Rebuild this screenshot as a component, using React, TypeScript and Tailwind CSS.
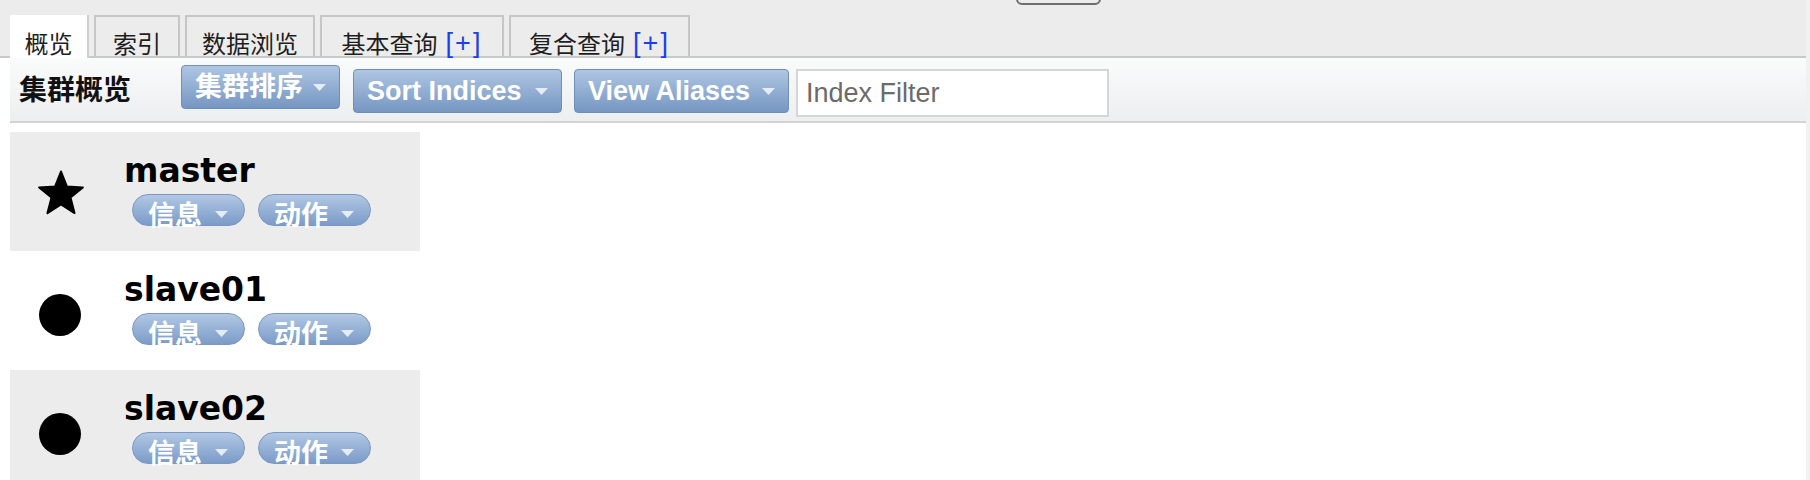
import React from "react"

const cjk = "font-['Noto_Sans_CJK_SC',sans-serif]"
const sans = "font-['Liberation_Sans','Noto_Sans_CJK_SC',sans-serif]"

const tabs = [
  { label: "概览", w: "w-[79px]", active: true },
  { label: "索引", w: "w-[86px]" },
  { label: "数据浏览", w: "w-[130px]" },
  { label: "基本查询", w: "w-[184px]", plus: true },
  { label: "复合查询", w: "w-[181px]", plus: true },
]

const nodes = [
  { name: "master", master: true },
  { name: "slave01" },
  { name: "slave02" },
]

const Caret = ({ className = "" }: { className?: string }) => (
  <svg className={className} width="13" height="7" viewBox="0 0 13 7">
    <path d="M0 0H13L6.5 7Z" fill="#e6ecf5" />
  </svg>
)

const Star = () => (
  <svg width="48" height="46" viewBox="0 0 48 46">
    <path
      d="M24 1.5L29.88 16.41L45.87 17.39L33.51 27.59L37.52 43.11L24 34.5L10.48 43.11L14.49 27.59L2.13 17.39L18.12 16.41Z"
      fill="#000"
      stroke="#000"
      strokeWidth="2"
      strokeLinejoin="round"
    />
  </svg>
)

function ToolButton({ label, w, top }: { label: string; w: string; top: string }) {
  return (
    <button
      className={`${w} ${top} h-[44px] flex items-center justify-between pl-[13px] pr-[13px] rounded-[4px] border border-[#6f8fbb] bg-gradient-to-b from-[#afc6e3] to-[#7696c2] text-white text-[27px] font-bold leading-none ${sans}`}
    >
      <span>{label}</span>
      <Caret />
    </button>
  )
}

function Pill({ label }: { label: string }) {
  return (
    <button
      className={`w-[113px] h-[32px] flex items-start justify-between pl-[15px] pr-[16px] pt-[5px] rounded-full border border-[#7a98c4] bg-gradient-to-b from-[#b2c8e4] to-[#7b9bc8] text-white text-[27px] font-bold leading-[27px] ${cjk}`}
    >
      <span>{label}</span>
      <Caret className="mt-[11px]" />
    </button>
  )
}

export default function App() {
  return (
    <div className="w-[1810px] h-[480px] flex bg-[#f1f1f1] overflow-hidden">
      <div className="w-[1806px] h-full flex flex-col bg-white">
        {/* header strip */}
        <div className="bg-[#ececec] flex flex-col">
          <div className="h-[15px] flex items-start pl-[1016px]">
            <div className="w-[85px] h-[35px] -mt-[30px] shrink-0 rounded-[6px] border-2 border-[#6e6e6e]" />
          </div>
          <div className="flex gap-[5px] pl-[10px] border-b-2 border-[#c9c9c9]">
            {tabs.map((t) =>
              t.active ? (
                <div
                  key={t.label}
                  className={`${t.w} h-[43px] -mb-[2px] flex justify-center pt-[16px] bg-white border-r-2 border-[#cfcfcf] text-[24px] leading-[24px] text-[#1e1e1e] ${cjk}`}
                >
                  {t.label}
                </div>
              ) : (
                <div
                  key={t.label}
                  className={`${t.w} h-[41px] flex justify-center pt-[14px] border-2 border-b-0 border-[#c6c6c6] text-[24px] leading-[24px] text-[#1e1e1e] whitespace-nowrap ${cjk}`}
                >
                  {t.label}
                  {t.plus && (
                    <span className={`ml-[8px] text-[#1d3fe6] text-[27px] tracking-[2px] ${sans}`}>[+]</span>
                  )}
                </div>
              )
            )}
          </div>
        </div>

        {/* toolbar */}
        <div className="ml-[10px] h-[65px] shrink-0 flex items-start border-b-2 border-[#d3d3d3] bg-gradient-to-b from-[#fafbfb] to-[#eceef0]">
          <h2 className={`mt-[16px] ml-[9px] mr-[50px] text-[28px] leading-[28px] font-bold text-[#111] ${cjk}`}>集群概览</h2>
          <ToolButton label="集群排序" w="w-[159px]" top="mt-[7px]" />
          <div className="ml-[13px]">
            <ToolButton label="Sort Indices" w="w-[209px]" top="mt-[11px]" />
          </div>
          <div className="ml-[12px]">
            <ToolButton label="View Aliases" w="w-[215px]" top="mt-[11px]" />
          </div>
          <input
            placeholder="Index Filter"
            className={`ml-[7px] mt-[11px] w-[313px] h-[48px] px-[8px] bg-white border-2 border-[#d6d6d6] text-[27px] text-[#333] placeholder:text-[#6b6b6b] outline-none ${sans}`}
          />
        </div>

        {/* nodes */}
        <div className="ml-[10px] mt-[9px] w-[410px] flex flex-col">
          {nodes.map((n, i) => (
            <div key={n.name} className={`h-[119px] shrink-0 flex ${i % 2 === 0 ? "bg-[#ececec]" : "bg-white"}`}>
              <div className="w-[99px] flex justify-center items-start">
                {n.master ? (
                  <div className="mt-[38px] ml-[2px]">
                    <Star />
                  </div>
                ) : (
                  <div className="mt-[43px] w-[42px] h-[42px] rounded-full bg-black" />
                )}
              </div>
              <div className="pl-[15px] pt-[20px] flex flex-col">
                <div className="text-[33px] leading-[37px] font-bold text-black font-['DejaVu_Sans',sans-serif]">{n.name}</div>
                <div className="mt-[5px] ml-[8px] flex gap-[13px]">
                  <Pill label="信息" />
                  <Pill label="动作" />
                </div>
              </div>
            </div>
          ))}
        </div>
      </div>
    </div>
  )
}
